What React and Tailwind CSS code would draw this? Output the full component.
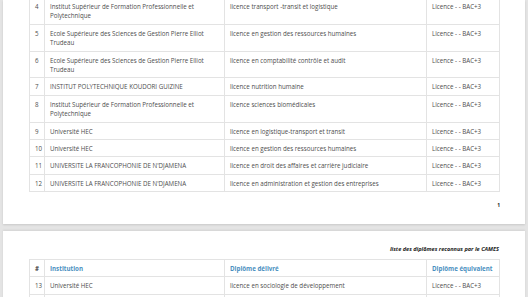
import React from 'react';

const page1Rows = [
    [4, 'Institut Supérieur de Formation Professionnelle et Polytechnique', 'licence transport -transit et logistique'],
    [5, 'Ecole Supérieure des Sciences de Gestion Pierre Elliot Trudeau', 'licence en gestion des ressources humaines'],
    [6, 'Ecole Supérieure des Sciences de Gestion Pierre Elliot Trudeau', 'licence en comptabilité contrôle et audit'],
    [7, 'INSTITUT POLYTECHNIQUE KOUDORI GUIZINE', 'licence nutrition humaine'],
    [8, 'Institut Supérieur de Formation Professionnelle et Polytechnique', 'licence sciences biomédicales'],
    [9, 'Université HEC', 'licence en logistique-transport et transit'],
    [10, 'Université HEC', 'licence en gestion des ressources humaines'],
    [11, "UNIVERSITE LA FRANCOPHONIE DE N'DJAMENA", 'licence en droit des affaires et carrière judiciaire'],
    [12, "UNIVERSITE LA FRANCOPHONIE DE N'DJAMENA", 'licence en administration et gestion des entreprises'],
];

const page2Rows = [
    [13, 'Université HEC', 'licence en sociologie de développement'],
];

const cell = 'border border-[#e3e3e3] pl-[5px] pr-[4px] pt-[4px] pb-[3px] align-top';

const Cols = () => (
    <colgroup>
        <col className="w-[15px]" />
        <col className="w-[180px]" />
        <col className="w-[202px]" />
        <col className="w-[73px]" />
    </colgroup>
);

const Row = ({ row }) => (
    <tr>
        <td className={`${cell} pl-[4px] pr-0`}>{row[0]}</td>
        <td className={cell}>{row[1]}</td>
        <td className={cell}>{row[2]}</td>
        <td className={`${cell} pl-[4px]`}>Licence - - BAC+3</td>
    </tr>
);

const App = () => {
    return (
        <div
            className="w-[528px] h-[297px] overflow-hidden bg-[#e4e4e4] px-[3px] text-[#4d4d4d]"
            style={{ fontFamily: '"Open Sans", "Noto Sans", sans-serif' }}
        >
            <div className="bg-white w-[522px] h-[224px] overflow-hidden shadow-[0_1px_2px_rgba(0,0,0,0.12)]">
                <table className="-mt-[3px] ml-[26px] w-[470px] table-fixed border-collapse text-[6.2px] leading-[9.4px]">
                    <Cols />
                    <tbody>
                        {page1Rows.map(r => <Row key={r[0]} row={r} />)}
                    </tbody>
                </table>
                <div className="flex justify-end pr-[25px] pt-[10px] text-[5px] font-bold text-[#222]">1</div>
            </div>

            <div className="mt-[7px] bg-white w-[522px] h-[80px] overflow-hidden shadow-[0_-1px_2px_rgba(0,0,0,0.08)]">
                <div className="flex justify-end pr-[26px] pt-[15px] text-[5.6px] leading-[7px] font-bold italic text-[#222]">
                    liste des diplômes reconnus par le CAMES
                </div>
                <table className="mt-[6px] ml-[26px] w-[470px] table-fixed border-collapse text-[6.2px] leading-[9.4px]">
                    <Cols />
                    <thead>
                        <tr className="font-bold text-[#4a8fc0]">
                            <th className={`${cell} pl-[4px] pr-0 text-left text-[#444]`}>#</th>
                            <th className={`${cell} text-left`}>Institution</th>
                            <th className={`${cell} text-left`}>Diplôme délivré</th>
                            <th className={`${cell} pl-[4px] text-left`}>Diplôme équivalent</th>
                        </tr>
                    </thead>
                    <tbody>
                        {page2Rows.map(r => <Row key={r[0]} row={r} />)}
                        <tr className="h-[17px]">
                            <td className={cell}></td>
                            <td className={cell}></td>
                            <td className={cell}></td>
                            <td className={cell}></td>
                        </tr>
                    </tbody>
                </table>
            </div>
        </div>
    );
};

export default App;
